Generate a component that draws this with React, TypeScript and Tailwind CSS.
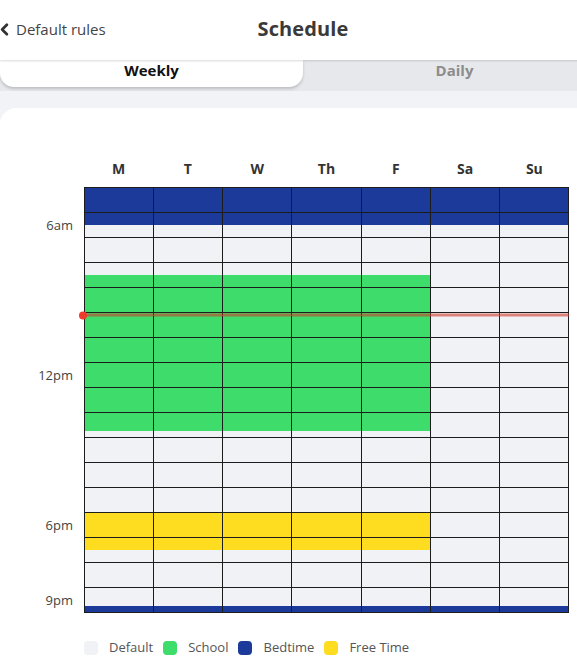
import { ChevronLeft } from "lucide-react";

const days = ["M", "T", "W", "Th", "F", "Sa", "Su"];

// grid starts at 4:30am, one row per hour
const START = 4.5;
const ROWS = 17;
const ROW_H = 25;

type Block = { from: number; to: number; days: number; color: string };

const blocks: Block[] = [
  { from: 4.5, to: 6, days: 7, color: "bg-[#1b3a9a]" },
  { from: 8, to: 14.25, days: 5, color: "bg-[#3ddc6b]" },
  { from: 17.5, to: 19, days: 5, color: "bg-[#fedc1f]" },
  { from: 21.25, to: 21.5, days: 7, color: "bg-[#1b3a9a]" },
];

const labels = [
  { at: 6, text: "6am" },
  { at: 12, text: "12pm" },
  { at: 18, text: "6pm" },
  { at: 21, text: "9pm" },
];

const legend = [
  { name: "Default", color: "bg-[#f1f2f6]" },
  { name: "School", color: "bg-[#3ddc6b]" },
  { name: "Bedtime", color: "bg-[#1b3a9a]" },
  { name: "Free Time", color: "bg-[#fedc1f]" },
];

const now = 9 + 38 / 60;
const y = (t: number) => (t - START) * ROW_H;

export default function App() {
  return (
    <div className="w-[577px] h-[672px] overflow-hidden bg-[#f2f3f6] font-['Open_Sans',sans-serif]">
      <div className="w-[606px]">
        <header className="relative z-10 grid h-[60px] grid-cols-[1fr_auto_1fr] items-center bg-white pb-[2px] shadow-[0_1px_2px_rgba(0,0,0,0.15)]">
          <div className="flex items-center gap-[2px] text-[15px] text-[#444]">
            <ChevronLeft size={19} strokeWidth={3.5} className="-ml-[5px] text-[#333]" />
            <span>Default rules</span>
          </div>
          <h1 className="text-[20px] font-bold tracking-[0.1px] text-[#3a3a3a]">Schedule</h1>
          <div />
        </header>

        <div className="flex h-[31px] bg-[#e7e8ec]">
          <div className="flex h-[27px] w-1/2 items-center justify-center rounded-b-[14px] bg-white pb-[6px] text-[15px] font-bold text-[#111] shadow-[0_2px_3px_rgba(0,0,0,0.18)]">
            Weekly
          </div>
          <div className="flex h-[27px] w-1/2 items-center justify-center pb-[6px] text-[15px] font-bold text-[#8c8c8c]">
            Daily
          </div>
        </div>

        <div className="mt-[17px] h-[600px] rounded-tl-[16px] bg-white pt-[50px]">
          <div className="mb-[9px] ml-[84px] grid h-[20px] w-[485px] grid-cols-7 items-center text-center text-[14px] font-bold text-[#333]">
            {days.map((d) => (
              <span key={d}>{d}</span>
            ))}
          </div>

          <div className="flex">
            <div className="relative w-[84px] text-[13px] text-[#444]">
              {labels.map((l) => (
                <span
                  key={l.text}
                  className="absolute right-[11px] -translate-y-1/2 leading-none"
                  style={{ top: y(l.at) }}
                >
                  {l.text}
                </span>
              ))}
            </div>

            <div className="relative w-[485px] bg-[#f1f2f6]">
              {blocks.map((b, i) => (
                <div
                  key={i}
                  className={`absolute left-0 ${b.color}`}
                  style={{
                    top: y(b.from),
                    height: y(b.to) - y(b.from),
                    width: b.days === 7 ? "100%" : `${(b.days / 7) * 100}%`,
                  }}
                />
              ))}

              <div className="relative z-10 grid grid-cols-7 border-t border-l border-[#1c1c1c]">
                {Array.from({ length: ROWS * 7 }).map((_, i) => (
                  <div key={i} className="h-[25px] border-r border-b border-[#1c1c1c]" />
                ))}
              </div>

              <div
                className="absolute left-0 right-0 z-20 h-[3px] -translate-y-1/2 bg-[#d0392b]/60"
                style={{ top: y(now) }}
              >
                <span className="absolute -left-[5px] top-1/2 h-[8px] w-[8px] -translate-y-1/2 rounded-full bg-[#ee3b2b]" />
              </div>
            </div>
          </div>

          <div className="ml-[84px] mt-[25px] flex h-[20px] items-center text-[13px] text-[#555]">
            {legend.map((l) => (
              <div key={l.name} className="mr-[10px] flex items-center gap-[11px]">
                <span className={`h-[14px] w-[14px] rounded-[4px] ${l.color}`} />
                <span>{l.name}</span>
              </div>
            ))}
          </div>
        </div>
      </div>
    </div>
  );
}
